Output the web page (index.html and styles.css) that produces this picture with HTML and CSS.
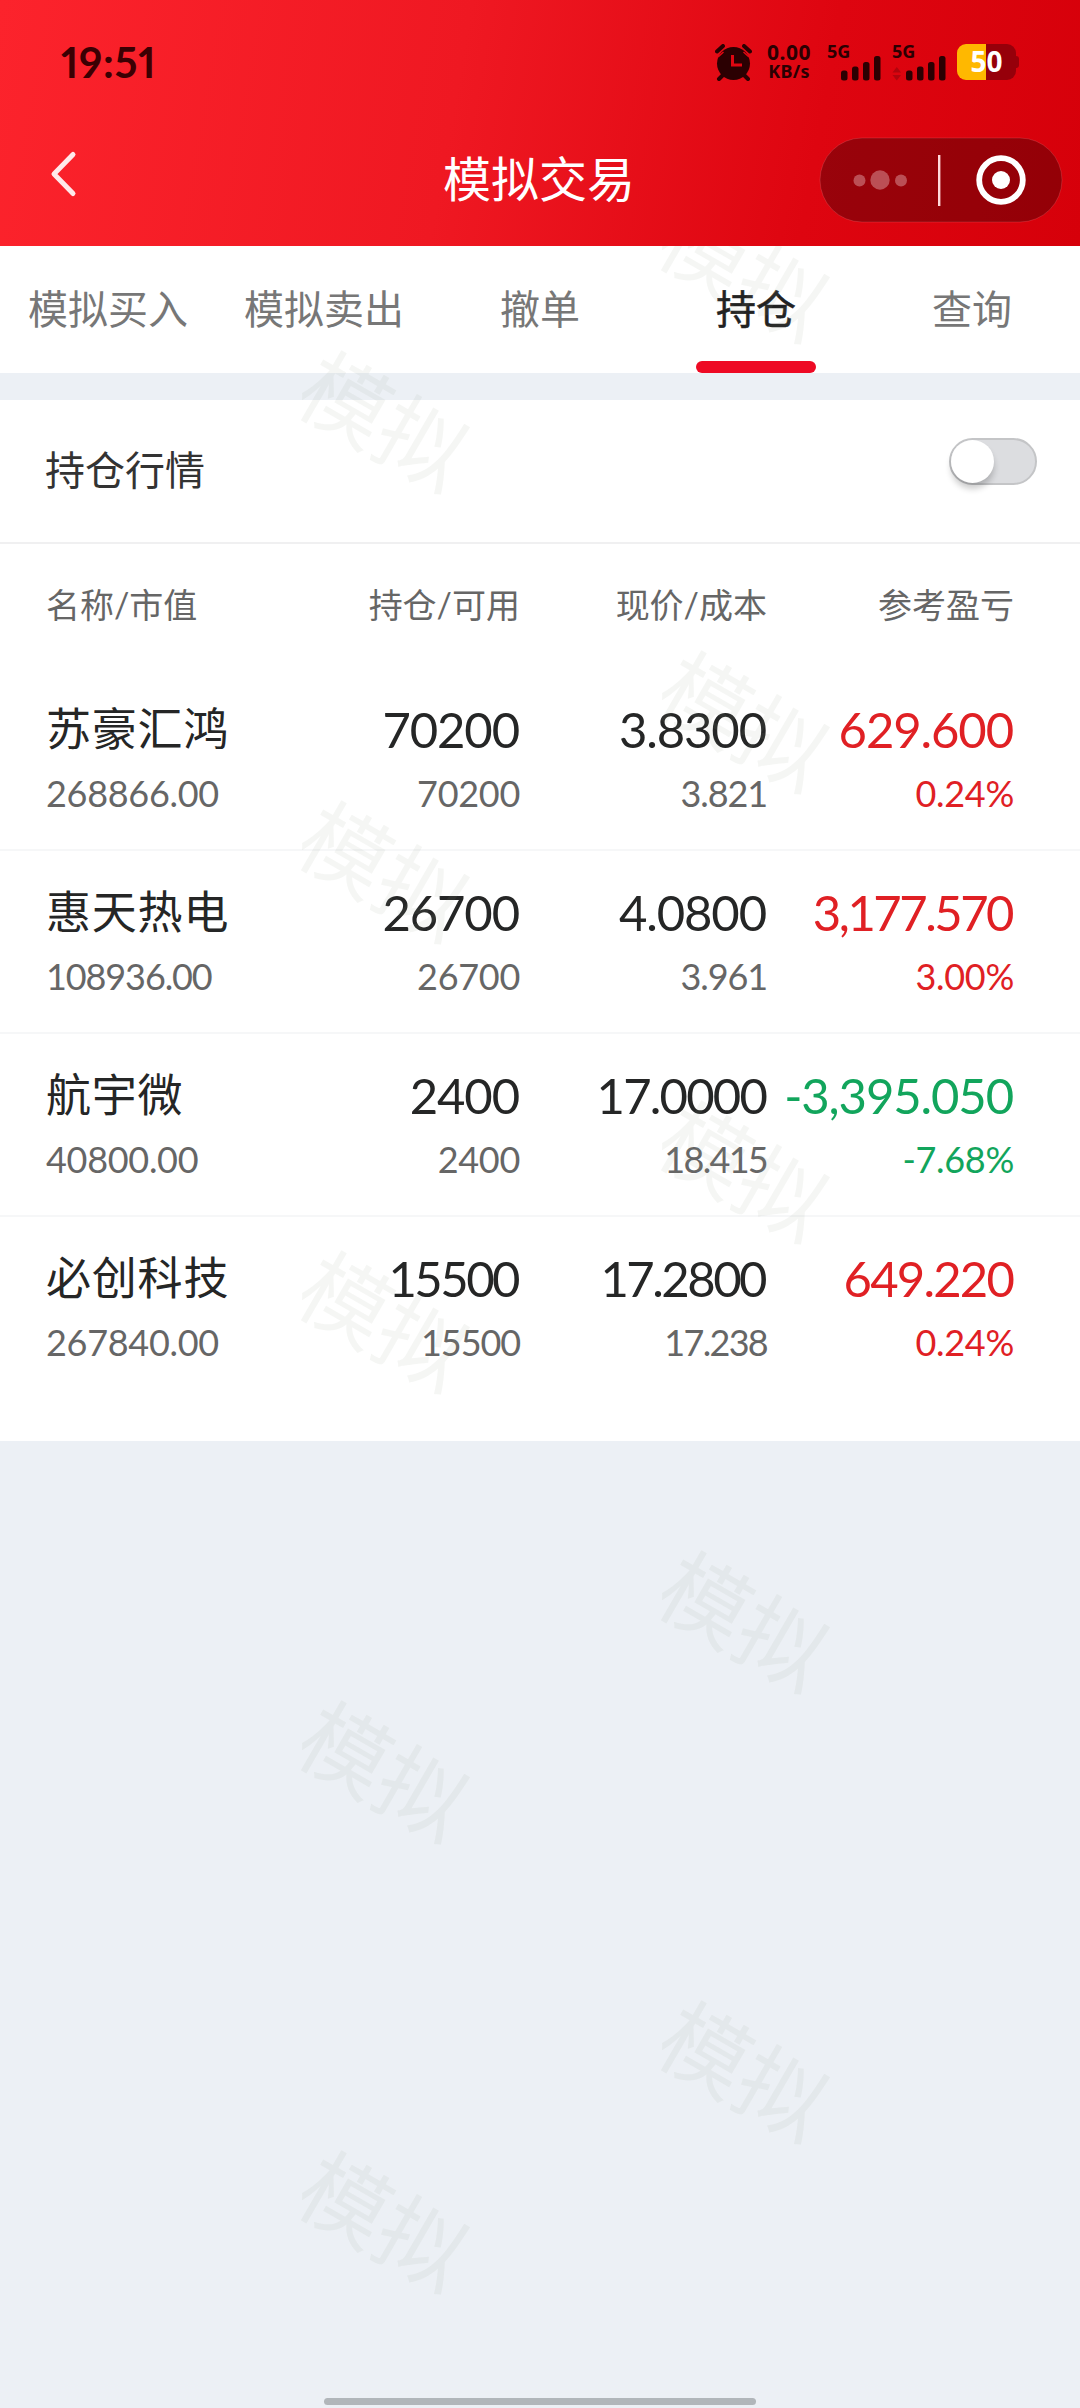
FILE: index.html
```html
<!DOCTYPE html>
<html lang="zh-CN">
<head>
    <meta charset="UTF-8">
    <meta name="viewport" content="width=device-width, initial-scale=1.0">
    <title>模拟交易</title>
    <link rel="stylesheet" href="styles.css">
</head>
<body>
    <header class="header">
        <div class="status-bar">
            <span class="time">19:51</span>
            <div class="status-icons">
                <svg class="alarm" width="37" height="37" viewBox="0 0 37 37">
                    <circle cx="18.5" cy="19.5" r="16.5" fill="#2b0002"/>
                    <path d="M2 7.5 L8 2 M35 7.5 L29 2 M8 31 L4 35 M29 31 L33 35" stroke="#2b0002" stroke-width="4" stroke-linecap="round" fill="none"/>
                    <path d="M8.5 8 L3 13 M28.5 8 L34 13" stroke="#e00611" stroke-width="1.5" fill="none"/>
                    <path d="M17.5 11 V21 H27" stroke="#e00611" stroke-width="3" fill="none"/>
                </svg>
                <div class="speed">
                    <span class="speed-num">0.00</span>
                    <span class="speed-unit">KB/s</span>
                </div>
                <div class="signal">
                    <span>5G</span>
                    <svg width="54" height="37" viewBox="0 0 54 37" fill="#2b0002">
                        <rect x="14" y="26.5" width="6.5" height="10" rx="2.5"/>
                        <rect x="25" y="22.5" width="6.5" height="14" rx="2.5"/>
                        <rect x="36" y="18" width="6.5" height="18.5" rx="2.5"/>
                        <rect x="47" y="12" width="6.5" height="24.5" rx="2.5"/>
                    </svg>
                </div>
                <div class="signal">
                    <span>5G</span>
                    <svg width="54" height="37" viewBox="0 0 54 37" fill="#2b0002">
                        <path d="M0.5 28.5 L4.8 23 L9 28.5 Z M0.5 31 L4.8 36.5 L9 31 Z" fill="#b1040d"/>
                        <rect x="14" y="26.5" width="6.5" height="10" rx="2.5"/>
                        <rect x="25" y="22.5" width="6.5" height="14" rx="2.5"/>
                        <rect x="36" y="18" width="6.5" height="18.5" rx="2.5"/>
                        <rect x="47" y="12" width="6.5" height="24.5" rx="2.5"/>
                    </svg>
                </div>
                <div class="battery"><span>50</span></div>
            </div>
        </div>
        <div class="nav-bar">
            <svg class="back" width="30" height="48" viewBox="0 0 30 48">
                <path d="M26 4.5 L7 24 L26 43.5" stroke="#ffe9ea" stroke-width="5" stroke-linecap="round" stroke-linejoin="round" fill="none"/>
            </svg>
            <h1>模拟交易</h1>
            <svg class="capsule" width="244" height="86" viewBox="0 0 244 86">
                <rect x="1" y="1" width="242" height="84" rx="42" fill="#000" fill-opacity="0.31" stroke="#fff" stroke-opacity="0.12" stroke-width="1"/>
                <g fill="#bb4f55">
                    <circle cx="40.5" cy="43.5" r="6"/>
                    <circle cx="61" cy="43" r="9.7"/>
                    <circle cx="82" cy="43.5" r="6"/>
                </g>
                <rect x="119" y="18" width="2.4" height="51" fill="#ffd9db"/>
                <circle cx="182" cy="43" r="21.8" fill="none" stroke="#fff" stroke-width="5.8"/>
                <circle cx="182" cy="43" r="9" fill="#fff"/>
            </svg>
        </div>
    </header>

    <main class="content">
        <nav class="tabs">
            <a class="tab">模拟买入</a>
            <a class="tab">模拟卖出</a>
            <a class="tab">撤单</a>
            <a class="tab active">持仓</a>
            <a class="tab">查询</a>
        </nav>

        <section class="panel">
            <div class="quote-row">
                <span>持仓行情</span>
                <div class="switch"></div>
            </div>

            <div class="row head">
                <div>名称/市值</div>
                <div>持仓/可用</div>
                <div>现价/成本</div>
                <div>参考盈亏</div>
            </div>

            <div class="row item">
                <div><p class="name">苏豪汇鸿</p><p class="sub">268866.00</p></div>
                <div><p class="num">70200</p><p class="sub">70200</p></div>
                <div><p class="num">3.8300</p><p class="sub snug">3.821</p></div>
                <div class="up"><p class="num">629.600</p><p class="sub">0.24%</p></div>
            </div>
            <div class="row item">
                <div><p class="name">惠天热电</p><p class="sub snug">108936.00</p></div>
                <div><p class="num">26700</p><p class="sub">26700</p></div>
                <div><p class="num">4.0800</p><p class="sub snug">3.961</p></div>
                <div class="up"><p class="num tight">3,177.570</p><p class="sub">3.00%</p></div>
            </div>
            <div class="row item">
                <div><p class="name">航宇微</p><p class="sub">40800.00</p></div>
                <div><p class="num">2400</p><p class="sub">2400</p></div>
                <div><p class="num snug">17.0000</p><p class="sub tight">18.415</p></div>
                <div class="down"><p class="num">-3,395.050</p><p class="sub">-7.68%</p></div>
            </div>
            <div class="row item">
                <div><p class="name">必创科技</p><p class="sub">267840.00</p></div>
                <div><p class="num tight">15500</p><p class="sub snug">15500</p></div>
                <div><p class="num tight">17.2800</p><p class="sub tight">17.238</p></div>
                <div class="up"><p class="num snug">649.220</p><p class="sub">0.24%</p></div>
            </div>
        </section>

        <!-- watermark layer over the content -->
        <div class="watermark">
            <div class="mark-col left">
                <span>模拟</span><span>模拟</span><span>模拟</span><span>模拟</span><span>模拟</span>
            </div>
            <div class="mark-col right">
                <span>模拟</span><span>模拟</span><span>模拟</span><span>模拟</span><span>模拟</span>
            </div>
        </div>
    </main>

    <div class="home-indicator"></div>
</body>
</html>
```
FILE: styles.css
```css
* { margin: 0; padding: 0; box-sizing: border-box; }
body {
    position: relative;
    width: 1080px;
    height: 2408px;
    display: flex;
    flex-direction: column;
    overflow: hidden;
    background: #ecf0f5;
    color: #252626;
    font-family: Lato, "Noto Sans CJK SC", sans-serif;
    font-variant-numeric: tabular-nums;
}

/* header */
.header {
    height: 246px;
    flex: none;
    background: linear-gradient(100deg, #fc232c 0%, #ef1822 42%, #de0510 75%, #d6000a 100%);
}
.status-bar {
    height: 124px;
    padding: 0 61px 0 61px;
    display: flex;
    justify-content: space-between;
    align-items: center;
}
.time {
    color: #3b0003;
    font-size: 42px;
    font-weight: 700;
    font-variant-numeric: proportional-nums;
    letter-spacing: 0.7px;
}
.status-icons {
    display: flex;
    align-items: center;
    color: #2b0002;
    font-family: "Noto Sans", sans-serif;
    font-weight: 700;
}
.alarm {
    margin-right: 13px;
}
.speed {
    width: 48px;
    margin-right: 14px;
    display: flex;
    flex-direction: column;
    align-items: center;
}
.speed-num {
    font-size: 21px;
    line-height: 19px;
    letter-spacing: 0.5px;
}
.speed-unit {
    font-size: 18px;
    line-height: 19px;
    letter-spacing: 0.3px;
}
.signal {
    position: relative;
    height: 37px;
    margin-right: 11px;
}
.signal span {
    position: absolute;
    left: 0;
    top: -2px;
    font-size: 18px;
    line-height: 18px;
}
.signal svg {
    display: block;
}
.battery {
    position: relative;
    width: 59px;
    height: 36px;
    margin-right: 3px;
    border-radius: 9px;
    background: linear-gradient(90deg, #ffb800 50%, #96000a 50%);
    color: #fff;
    font-size: 28px;
    line-height: 35px;
    text-align: center;
}
.battery::after {
    content: "";
    position: absolute;
    left: 59px;
    top: 12px;
    width: 3px;
    height: 12px;
    border-radius: 0 3px 3px 0;
    background: #96000a;
}
.nav-bar {
    height: 112px;
    padding: 0 17px 0 47px;
    display: grid;
    grid-template-columns: 244px 1fr 244px;
    align-items: center;
}
.back {
    margin-top: -13px;
}
.nav-bar h1 {
    color: #fff;
    font-size: 48px;
    font-weight: 400;
    line-height: 60px;
    text-align: center;
    margin: -3px 0 0 -32px;
}

/* tabs */
.content {
    position: relative;
    flex: 1;
    overflow: hidden;
}
.tabs {
    height: 127px;
    display: flex;
    background: #fff;
}
.tab {
    position: relative;
    flex: 1;
    color: #777;
    font-size: 40px;
    line-height: 126px;
    text-align: center;
}
.tab.active {
    color: #222;
    -webkit-text-stroke: 0.5px #222;
}
.tab.active::after {
    content: "";
    position: absolute;
    left: 48px;
    bottom: 0;
    width: 120px;
    height: 12px;
    border-radius: 6px;
    background: #ee0a24;
}

/* positions */
.panel {
    margin-top: 27px;
    height: 1041px;
    background: #fff;
}
.quote-row {
    height: 144px;
    padding: 0 43px 0 45px;
    display: flex;
    justify-content: space-between;
    align-items: center;
    border-bottom: 2px solid #f0f0f1;
    color: #333;
    font-size: 40px;
}
.quote-row span {
    margin-bottom: 6px;
}
.switch {
    width: 88px;
    height: 47px;
    margin-bottom: 20px;
    border: 2px solid #c4c5c7;
    border-radius: 24px;
    background: #dcdde0;
}
.switch::before {
    content: "";
    display: block;
    width: 43px;
    height: 43px;
    border-radius: 50%;
    background: #fff;
    box-shadow: 0 6px 6px rgba(0, 0, 0, 0.2);
}
.row {
    display: grid;
    grid-template-columns: 226px 248px 247px 247px;
    padding: 0 66px 0 46px;
    text-align: right;
    white-space: nowrap;
}
.row > div {
    display: flex;
    flex-direction: column;
    align-items: flex-end;
}
.row > div:first-child {
    align-items: flex-start;
}
.head {
    height: 124px;
    color: #666;
    font-size: 34px;
    line-height: 122px;
}
.item {
    height: 183px;
    padding-top: 29px;
    border-bottom: 2px solid #f6f7f8;
}
.item:last-child {
    border-bottom: none;
}
.name {
    font-size: 45px;
    line-height: 64px;
    letter-spacing: 0.8px;
}
.num {
    font-size: 49px;
    line-height: 64px;
    letter-spacing: -1.1px;
    margin-right: 1px;
}
.sub {
    color: #666;
    font-size: 36px;
    line-height: 64px;
    letter-spacing: -0.3px;
}
.num.snug {
    letter-spacing: -1.8px;
}
.num.tight {
    letter-spacing: -2.5px;
    margin-right: 2px;
}
.sub.snug {
    letter-spacing: -1.1px;
}
.sub.tight {
    letter-spacing: -1.7px;
}
.up, .up .sub {
    color: #e02024;
}
.down, .down .sub {
    color: #12a55c;
}

.watermark {
    position: absolute;
    inset: 0;
    color: rgba(145, 155, 140, 0.095);
    font-size: 88px;
    line-height: 100px;
    pointer-events: none;
}
.mark-col {
    position: absolute;
    width: 180px;
    display: flex;
    flex-direction: column;
    gap: 350px;
}
.mark-col.left {
    left: 296px;
    top: 126px;
}
.mark-col.right {
    left: 656px;
    top: -24px;
}
.mark-col span {
    transform: rotate(30deg);
}
.home-indicator {
    position: absolute;
    left: 324px;
    bottom: 3px;
    width: 432px;
    height: 7px;
    border-radius: 4px;
    background: #b1b6ba;
}
```
